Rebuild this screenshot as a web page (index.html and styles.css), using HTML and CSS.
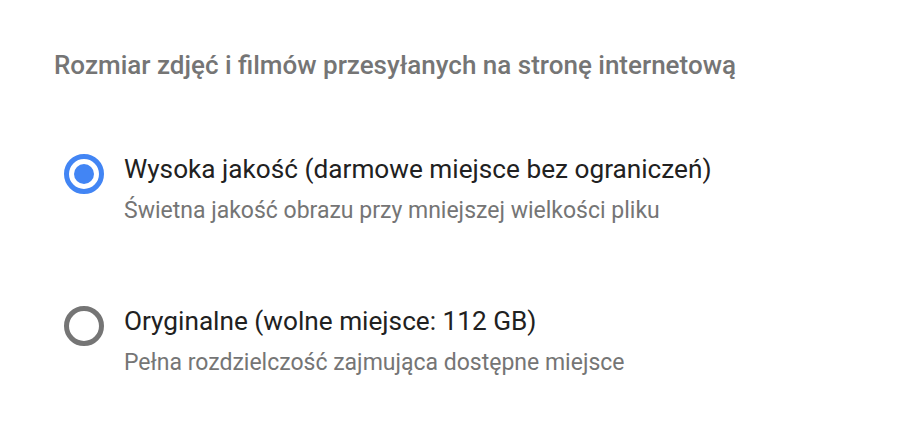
FILE: index.html
```html
<!DOCTYPE html>
<html lang="pl">
<head>
<meta charset="utf-8">
<title>Rozmiar przesyłanych</title>
<link rel="stylesheet" href="styles.css">
</head>
<body>
<main class="panel">
  <h1 class="heading">Rozmiar zdjęć i filmów przesyłanych na stronę internetową</h1>
  <div class="options">
    <label class="option">
      <span class="radio radio-checked"><span class="dot"></span></span>
      <span class="texts">
        <span class="opt-title">Wysoka jakość (darmowe miejsce bez ograniczeń)</span>
        <span class="opt-sub">Świetna jakość obrazu przy mniejszej wielkości pliku</span>
      </span>
    </label>
    <label class="option">
      <span class="radio"></span>
      <span class="texts">
        <span class="opt-title">Oryginalne (wolne miejsce: 112 GB)</span>
        <span class="opt-sub">Pełna rozdzielczość zajmująca dostępne miejsce</span>
      </span>
    </label>
  </div>
</main>
</body>
</html>
```
FILE: styles.css
```css
html, body {
  margin: 0;
  padding: 0;
  background: #ffffff;
}
body {
  font-family: Roboto, "Liberation Sans", sans-serif;
}
.panel {
  padding: 50px 0 0 54px;
}
.heading {
  margin: 0;
  font-size: 26px;
  line-height: 30px;
  font-weight: 500;
  color: #757575;
}
.options {
  display: flex;
  flex-direction: column;
  gap: 82px;
  margin-top: 74px;
  padding-left: 10px;
}
.option {
  display: flex;
  align-items: flex-start;
  gap: 20px;
}
.radio {
  box-sizing: border-box;
  width: 40px;
  height: 40px;
  border: 5px solid #757575;
  border-radius: 50%;
  display: flex;
  align-items: center;
  justify-content: center;
  flex: none;
}
.radio-checked {
  border-color: #4285f4;
}
.dot {
  width: 20px;
  height: 20px;
  border-radius: 50%;
  background: #4285f4;
}
.texts {
  display: flex;
  flex-direction: column;
  gap: 13px;
}
.opt-title {
  font-size: 26.2px;
  line-height: 30px;
  color: #212121;
}
.opt-sub {
  font-size: 23px;
  line-height: 27px;
  color: #757575;
}
```
